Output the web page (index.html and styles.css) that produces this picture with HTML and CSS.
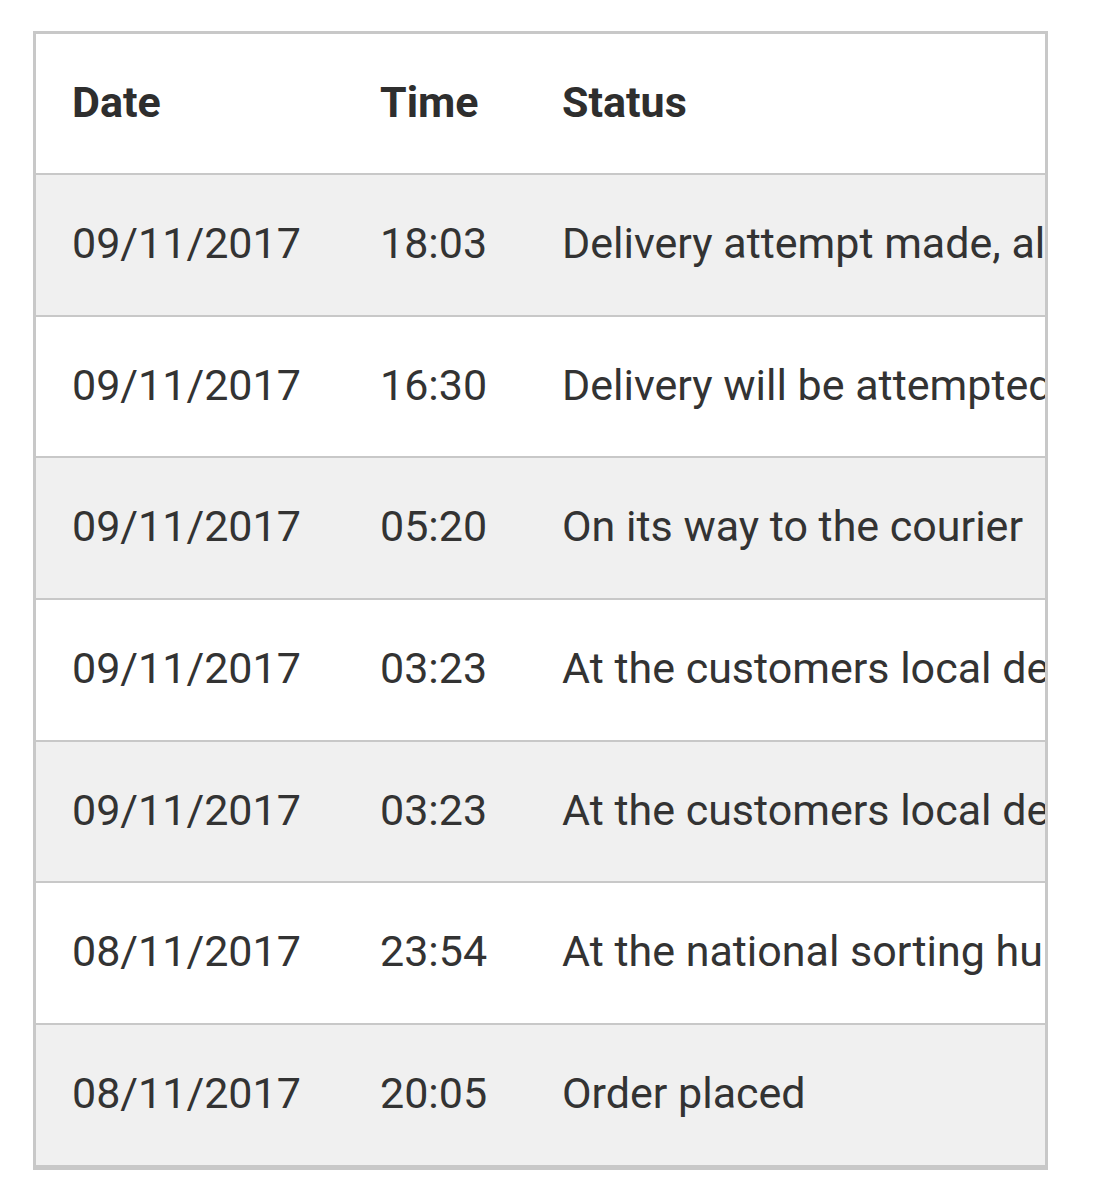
FILE: index.html
```html
<!DOCTYPE html>
<html>
<head>
<meta charset="utf-8">
<link rel="stylesheet" href="styles.css">
</head>
<body>
<div class="frame">
  <table class="track">
    <thead>
      <tr><th class="c-date">Date</th><th class="c-time">Time</th><th class="c-status">Status</th></tr>
    </thead>
    <tbody>
      <tr class="alt"><td>09/11/2017</td><td>18:03</td><td>Delivery attempt made, all attempts complete</td></tr>
      <tr><td>09/11/2017</td><td>16:30</td><td>Delivery will be attempted today</td></tr>
      <tr class="alt"><td>09/11/2017</td><td>05:20</td><td>On its way to the courier</td></tr>
      <tr><td>09/11/2017</td><td>03:23</td><td>At the customers local delivery depot</td></tr>
      <tr class="alt"><td>09/11/2017</td><td>03:23</td><td>At the customers local delivery depot</td></tr>
      <tr><td>08/11/2017</td><td>23:54</td><td>At the national sorting hub</td></tr>
      <tr class="alt"><td>08/11/2017</td><td>20:05</td><td>Order placed</td></tr>
    </tbody>
  </table>
</div>
</body>
</html>
```

FILE: styles.css
```css
html, body {
  margin: 0;
  padding: 0;
  background: #ffffff;
}
body {
  padding: 31px 0 0 33px;
}
.frame {
  width: 1009px;
  border: 3px solid #c8c8c8;
  border-bottom-width: 5px;
  overflow: hidden;
  background: #ffffff;
}
.track {
  border-collapse: collapse;
  table-layout: fixed;
  width: 1400px;
  font-family: Roboto, "Liberation Sans", sans-serif;
  font-size: 43px;
  color: #333333;
}
.track th, .track td {
  padding: 0 0 4px 36px;
  text-align: left;
  white-space: nowrap;
  vertical-align: middle;
}
.track th {
  font-weight: 700;
  color: #2e2e2e;
  height: 135px;
}
.track td {
  height: 135.7px;
  border-top: 2px solid #c8c8c8;
  font-weight: 400;
}
.c-date { width: 272px; }
.c-time { width: 146px; }
.track tr.alt td {
  background: #f0f0f0;
}
```
